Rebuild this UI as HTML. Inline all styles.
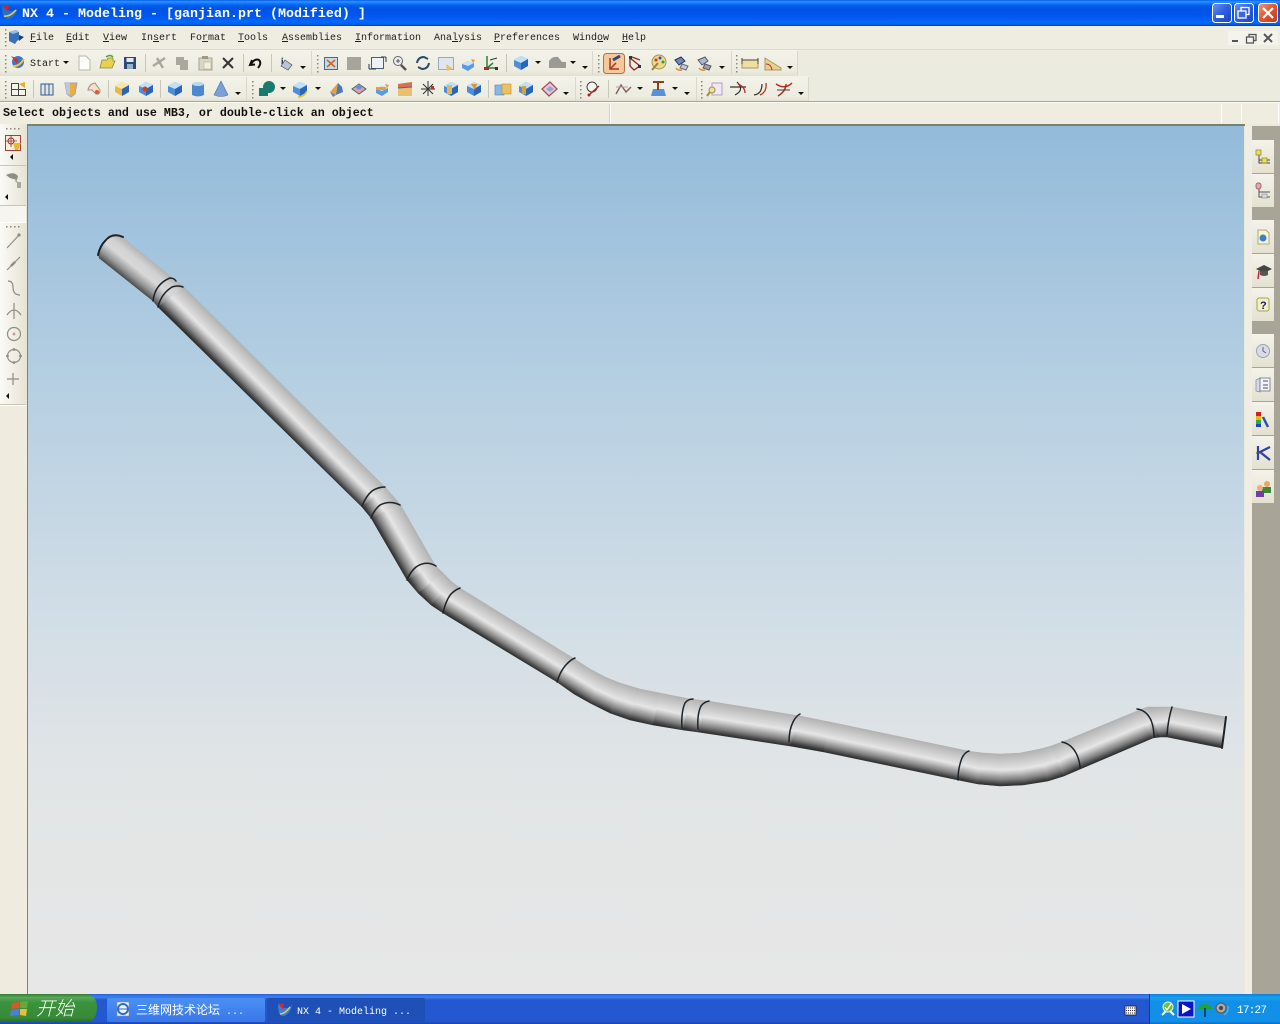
<!DOCTYPE html>
<html><head><meta charset="utf-8"><title>NX 4 - Modeling</title>
<style>
html,body{margin:0;padding:0;width:1280px;height:1024px;overflow:hidden;background:#ece9d8}
svg{display:block;position:absolute;left:0;top:0}
text{white-space:pre}
.m{font:10px "Liberation Mono",monospace;fill:#1c1c1c}
</style></head><body>
<svg width="1280" height="1024" viewBox="0 0 1280 1024" xmlns="http://www.w3.org/2000/svg">
<defs>
<linearGradient id="tb" x1="0" y1="0" x2="0" y2="1">
<stop offset="0" stop-color="#0058ee"/><stop offset=".06" stop-color="#3593ff"/><stop offset=".12" stop-color="#127dff"/><stop offset=".2" stop-color="#0262ee"/><stop offset=".3" stop-color="#0054e3"/><stop offset=".56" stop-color="#0055eb"/><stop offset=".7" stop-color="#005bf5"/><stop offset=".82" stop-color="#026afe"/><stop offset=".92" stop-color="#0062ef"/><stop offset=".97" stop-color="#0052d6"/><stop offset="1" stop-color="#003092"/>
</linearGradient>
<linearGradient id="vp" x1="0" y1="0" x2="0" y2="1">
<stop offset="0" stop-color="#93bbda"/><stop offset=".3" stop-color="#b6cfe2"/><stop offset=".55" stop-color="#d0dde6"/><stop offset=".75" stop-color="#e2e5e6"/><stop offset="1" stop-color="#e7e7e7"/>
</linearGradient>
<linearGradient id="lt" x1="0" y1="0" x2="1" y2="0"><stop offset="0" stop-color="#fbfaf6"/><stop offset="1" stop-color="#e6e3d3"/></linearGradient>
<linearGradient id="rowg" x1="0" y1="0" x2="0" y2="1"><stop offset="0" stop-color="#f4f3ea"/><stop offset=".8" stop-color="#ecebdf"/><stop offset="1" stop-color="#e2e0cf"/></linearGradient>
<linearGradient id="rb" x1="0" y1="0" x2="0" y2="1"><stop offset="0" stop-color="#f4f3ea"/><stop offset="1" stop-color="#e4e1d0"/></linearGradient>
<linearGradient id="btb" x1="0" y1="0" x2="1" y2="1"><stop offset="0" stop-color="#6d93f0"/><stop offset=".5" stop-color="#2e5fdc"/><stop offset="1" stop-color="#1a44c0"/></linearGradient>
<linearGradient id="btr" x1="0" y1="0" x2="1" y2="1"><stop offset="0" stop-color="#ee9a80"/><stop offset=".5" stop-color="#e0542e"/><stop offset="1" stop-color="#c43a18"/></linearGradient>
<linearGradient id="tk" x1="0" y1="0" x2="0" y2="1"><stop offset="0" stop-color="#2a62d8"/><stop offset=".1" stop-color="#3c82ee"/><stop offset=".2" stop-color="#2458d0"/><stop offset=".9" stop-color="#2458d0"/><stop offset="1" stop-color="#1c44a8"/></linearGradient>
<linearGradient id="tr" x1="0" y1="0" x2="0" y2="1"><stop offset="0" stop-color="#0f7ed8"/><stop offset=".12" stop-color="#19a0ee"/><stop offset=".25" stop-color="#1290e8"/><stop offset=".9" stop-color="#1290e8"/><stop offset="1" stop-color="#0c6cc8"/></linearGradient>
<linearGradient id="st" x1="0" y1="0" x2="0" y2="1"><stop offset="0" stop-color="#357a35"/><stop offset=".12" stop-color="#58a858"/><stop offset=".3" stop-color="#3d923d"/><stop offset=".85" stop-color="#378a37"/><stop offset="1" stop-color="#2a6a2a"/></linearGradient>
<linearGradient id="task1" x1="0" y1="0" x2="0" y2="1"><stop offset="0" stop-color="#4a90f4"/><stop offset="1" stop-color="#3a78ea"/></linearGradient>

<linearGradient id="g0" gradientUnits="userSpaceOnUse" x1="0" y1="0" x2="0" y2="1">
<stop offset="0" stop-color="#b4b4b4"/><stop offset=".25" stop-color="#d2d2d2"/><stop offset=".5" stop-color="#d8d8d8"/><stop offset=".78" stop-color="#989898"/><stop offset="1" stop-color="#4a4a4a"/>
</linearGradient>
<linearGradient id="g1" gradientUnits="userSpaceOnUse" x1="0" y1="0" x2="0" y2="1">
<stop offset="0" stop-color="#b2b2b2"/><stop offset=".2" stop-color="#c6c6c6"/><stop offset=".42" stop-color="#dcdcdc"/><stop offset=".5" stop-color="#e6e6e6"/><stop offset=".6" stop-color="#c8c8c8"/><stop offset=".8" stop-color="#828282"/><stop offset=".95" stop-color="#3e3e3e"/><stop offset="1" stop-color="#2e2e2e"/>
</linearGradient>
<linearGradient id="q1" href="#g0" x1="148" y1="258" x2="128.8" y2="281.9"/>
<linearGradient id="q2" href="#g0" x1="179" y1="283" x2="159.6" y2="307.2"/>
<linearGradient id="q3" href="#g1" x1="284.5" y1="387" x2="262.4" y2="409.3"/>
<linearGradient id="q4" href="#g1" x1="392.5" y1="495.5" x2="366.5" y2="512.5"/>
<linearGradient id="q5" href="#g1" x1="417.5" y1="534.5" x2="389.8" y2="550.5"/>
<linearGradient id="q6" href="#g1" x1="439" y1="569" x2="412.5" y2="586.5"/>
<linearGradient id="q7a" href="#g1" x1="447.5" y1="577.5" x2="424.5" y2="599"/>
<linearGradient id="q7b" href="#g1" x1="456" y1="585" x2="437" y2="609"/>
<linearGradient id="q8" href="#g1" x1="516.5" y1="623" x2="501.1" y2="648.2"/>
<linearGradient id="q9" href="#g1" x1="581.5" y1="663.5" x2="566" y2="688.7"/>
<linearGradient id="q10a" href="#g1" x1="597.5" y1="673" x2="582" y2="698.5"/>
<linearGradient id="q10b" href="#g1" x1="612.5" y1="680" x2="600" y2="708"/>
<linearGradient id="q11a" href="#g1" x1="630" y1="686" x2="620" y2="716.5"/>
<linearGradient id="q11b" href="#g1" x1="650" y1="691" x2="641.5" y2="722.5"/>
<linearGradient id="q12" href="#g1" x1="675" y1="696" x2="668" y2="727.5"/>
<linearGradient id="q13" href="#g1" x1="699" y1="700" x2="690.5" y2="731"/>
<linearGradient id="q14" href="#g1" x1="754" y1="708.5" x2="749.1" y2="739.8"/>
<linearGradient id="q15" href="#g1" x1="815" y1="719" x2="809.1" y2="748.4"/>
<linearGradient id="q16" href="#g1" x1="899" y1="736.5" x2="892.7" y2="766.4"/>
<linearGradient id="q17" href="#g1" x1="975.5" y1="752" x2="968" y2="782"/>
<linearGradient id="q18" href="#g1" x1="991.5" y1="753.5" x2="989" y2="785"/>
<linearGradient id="q19" href="#g1" x1="1010" y1="753.5" x2="1011.5" y2="785.5"/>
<linearGradient id="q20" href="#g1" x1="1030" y1="751" x2="1035.5" y2="783"/>
<linearGradient id="q21a" href="#g1" x1="1045.5" y1="747.5" x2="1056" y2="778.5"/>
<linearGradient id="q21b" href="#g1" x1="1056.5" y1="744" x2="1071" y2="773"/>
<linearGradient id="q22" href="#g1" x1="1099.5" y1="726.5" x2="1111.7" y2="755.6"/>
<linearGradient id="q23" href="#g1" x1="1142" y1="709" x2="1156.5" y2="737.5"/>
<linearGradient id="q24" href="#g1" x1="1159.5" y1="707" x2="1163.5" y2="737"/>
<linearGradient id="q25" href="#g1" x1="1199" y1="712" x2="1193.2" y2="742.1"/>

<g id="grip" fill="#8a8878"><rect x="0" y="0" width="1.5" height="1.5"/><rect x="0" y="4" width="1.5" height="1.5"/><rect x="0" y="8" width="1.5" height="1.5"/><rect x="0" y="12" width="1.5" height="1.5"/><rect x="0" y="16" width="1.5" height="1.5"/></g>
<path id="ar" d="M-3 0H3L0 3Z" fill="#111"/>
<g id="cb"><path d="M-7-3L0-7L7-4V3L0 7L-7 3Z" fill="#4a8fd8"/><path d="M-7-3L0-7L7-4L0 0Z" fill="#bfe0f8"/><path d="M0 0L7-4V3L0 7Z" fill="#2a66b8"/></g>
<g id="cy"><path d="M-7-3L0-7L7-4V3L0 7L-7 3Z" fill="#e8b848"/><path d="M-7-3L0-7L7-4L0 0Z" fill="#f6e6a8"/><path d="M0 0L7-4V3L0 7Z" fill="#2a66b8"/></g>
<g id="sb"><path d="M-6-1L0-4L6-2V2L0 6L-6 3Z" fill="#5a9ae0"/><path d="M-6-1L0-4L6-2L0 1Z" fill="#c8e4f8"/><path d="M3-6L7-5L5-2Z" fill="#e89830"/></g>
</defs>

<!-- base chrome -->
<rect width="1280" height="1024" fill="#ece9d8"/>
<!-- viewport -->
<rect x="28" y="126" width="1216" height="868" fill="url(#vp)"/>
<rect x="27" y="124" width="1" height="870" fill="#7d8578"/>
<rect x="27" y="124" width="1218" height="2" fill="#7a8072"/>

<!-- tube -->
<g>
<path d="M122 237Q110 230 103 242L98 254L99 258L122 237Z" fill="url(#q1)"/>
<path d="M122 237L174 279L153 301L99 258Z" fill="url(#q1)" stroke="url(#q1)" stroke-width=".5"/>
<path d="M174 279L184 287L158 307L153 301Z" fill="url(#q2)" stroke="url(#q2)" stroke-width=".5"/>
<path d="M184 287L385 487L362 507L158 307Z" fill="url(#q3)" stroke="url(#q3)" stroke-width=".5"/>
<path d="M385 487L400 504L371 518L362 507Z" fill="url(#q4)" stroke="url(#q4)" stroke-width=".5"/>
<path d="M400 504L435 565L407 580L371 518Z" fill="url(#q5)" stroke="url(#q5)" stroke-width=".5"/>
<path d="M435 565L443 573L418 593L407 580Z" fill="url(#q6)" stroke="url(#q6)" stroke-width=".5"/>
<path d="M443 573L452 582L431 605L418 593Z" fill="url(#q7a)" stroke="url(#q7a)" stroke-width=".5"/>
<path d="M452 582L460 588L443 613L431 605Z" fill="url(#q7b)" stroke="url(#q7b)" stroke-width=".5"/>
<path d="M460 588L573 658L557 682L443 613Z" fill="url(#q8)" stroke="url(#q8)" stroke-width=".5"/>
<path d="M573 658L590 669L574 694L557 682Z" fill="url(#q9)" stroke="url(#q9)" stroke-width=".5"/>
<path d="M590 669L605 677L590 703L574 694Z" fill="url(#q10a)" stroke="url(#q10a)" stroke-width=".5"/>
<path d="M605 677L620 683L610 713L590 703Z" fill="url(#q10b)" stroke="url(#q10b)" stroke-width=".5"/>
<path d="M620 683L640 689L630 720L610 713Z" fill="url(#q11a)" stroke="url(#q11a)" stroke-width=".5"/>
<path d="M640 689L660 693L653 725L630 720Z" fill="url(#q11b)" stroke="url(#q11b)" stroke-width=".5"/>
<path d="M660 693L690 699L683 730L653 725Z" fill="url(#q12)" stroke="url(#q12)" stroke-width=".5"/>
<path d="M690 699L708 701L698 732L683 730Z" fill="url(#q13)" stroke="url(#q13)" stroke-width=".5"/>
<path d="M708 701L800 716L790 746L698 732Z" fill="url(#q14)" stroke="url(#q14)" stroke-width=".5"/>
<path d="M800 716L830 722L824 752L790 746Z" fill="url(#q15)" stroke="url(#q15)" stroke-width=".5"/>
<path d="M830 722L968 751L958 780L824 752Z" fill="url(#q16)" stroke="url(#q16)" stroke-width=".5"/>
<path d="M968 751L983 753L978 784L958 780Z" fill="url(#q17)" stroke="url(#q17)" stroke-width=".5"/>
<path d="M983 753L1000 754L1000 786L978 784Z" fill="url(#q18)" stroke="url(#q18)" stroke-width=".5"/>
<path d="M1000 754L1020 753L1023 785L1000 786Z" fill="url(#q19)" stroke="url(#q19)" stroke-width=".5"/>
<path d="M1020 753L1040 749L1048 781L1023 785Z" fill="url(#q20)" stroke="url(#q20)" stroke-width=".5"/>
<path d="M1040 749L1051 746L1064 776L1048 781Z" fill="url(#q21a)" stroke="url(#q21a)" stroke-width=".5"/>
<path d="M1051 746L1062 742L1078 770L1064 776Z" fill="url(#q21b)" stroke="url(#q21b)" stroke-width=".5"/>
<path d="M1062 742L1137 711L1153 738L1078 770Z" fill="url(#q22)" stroke="url(#q22)" stroke-width=".5"/>
<path d="M1137 711L1147 707L1160 737L1153 738Z" fill="url(#q23)" stroke="url(#q23)" stroke-width=".5"/>
<path d="M1147 707L1172 707L1167 737L1160 737Z" fill="url(#q24)" stroke="url(#q24)" stroke-width=".5"/>
<path d="M1172 707L1226 717L1222 748L1167 737Z" fill="url(#q25)" stroke="url(#q25)" stroke-width=".5"/>
</g>
<!-- rings -->
<g fill="none" stroke="#1c242a" stroke-width="1.5" stroke-linecap="round">
<path d="M98 255Q100 246 105 241Q112 232 123 237" stroke-width="2"/>
<path d="M153 301Q155 284 170 278Q174 278 176 281"/>
<path d="M158 307Q161 294 172 287Q178 285 183 287"/>
<path d="M362 506Q366 496 372 491Q378 487 385 487"/>
<path d="M371 518Q374 510 380 505Q390 500 400 505"/>
<path d="M407 580Q410 572 416 567Q426 560 436 566"/>
<path d="M443 613Q446 600 451 594Q455 590 460 588"/>
<path d="M557 682Q560 672 565 666Q570 660 575 658"/>
<path d="M682 728Q681 712 685 703Q688 699 693 699"/>
<path d="M698 729Q697 714 701 706Q704 702 709 701"/>
<path d="M789 742Q789 730 793 722Q796 716 800 714"/>
<path d="M958 780Q958 768 962 758Q965 752 969 751"/>
<path d="M1062 742Q1072 744 1077 755Q1080 762 1080 768"/>
<path d="M1137 709Q1146 710 1151 720Q1154 728 1154 737"/>
<path d="M1172 707Q1168 720 1167 735"/>
<path d="M1226 717L1222 748" stroke-width="2"/>
</g>

<!-- title bar -->
<rect width="1280" height="26" fill="url(#tb)"/>
<g transform="translate(10,13)"><path d="M-8-7Q-2-1 4-2Q7-3 8-7Q7 3-1 6Q-5 6-7 3Q-8-3-8-7Z" fill="#2a70c8"/><path d="M-8-8L-1-7L-2-1Z" fill="#d02828"/><path d="M-6 3Q0 4 6-3" fill="none" stroke="#e8d050" stroke-width="1.6"/></g>
<text x="22" y="17" style="font:bold 13.33px 'Liberation Mono',monospace" fill="#fff">NX 4 - Modeling - [ganjian.prt (Modified) ]</text>
<g stroke="#fff" stroke-width="1">
<rect x="1212.500" y="3.500" width="19" height="19" rx="3" fill="url(#btb)"/>
<rect x="1234.500" y="3.500" width="19" height="19" rx="3" fill="url(#btb)"/>
<rect x="1258.500" y="3.500" width="19" height="19" rx="3" fill="url(#btr)"/>
</g>
<rect x="1216" y="15" width="8" height="3" fill="#fff"/>
<g fill="none" stroke="#fff" stroke-width="1.3"><rect x="1241" y="7.500" width="8" height="7"/><rect x="1238" y="11" width="8" height="7" fill="#3a68dc"/></g>
<path d="M1263 8L1273 18M1273 8L1263 18" stroke="#fff" stroke-width="2.2"/>

<!-- menu bar -->
<rect y="26" width="1280" height="24" fill="#efede2"/>
<rect y="49" width="1280" height="1" fill="#dcdaca"/>
<use href="#grip" x="5" y="29"/>
<g transform="translate(16,37)"><path d="M-7-5L0-7L3-5V-1L7 0L1 4L-1 7L-7 4Z" fill="#3a70b8"/><path d="M-7-5L0-7L3-5L-3-3Z" fill="#90c0e8"/><path d="M3-2L8 0L3 4Z" fill="#1c3e78"/></g>
<g class="m">
<text class="m" x="30" y="40"><tspan text-decoration="underline">F</tspan>ile</text>
<text class="m" x="66" y="40"><tspan text-decoration="underline">E</tspan>dit</text>
<text class="m" x="103" y="40"><tspan text-decoration="underline">V</tspan>iew</text>
<text class="m" x="141" y="40">In<tspan text-decoration="underline">s</tspan>ert</text>
<text class="m" x="190" y="40">Fo<tspan text-decoration="underline">r</tspan>mat</text>
<text class="m" x="238" y="40"><tspan text-decoration="underline">T</tspan>ools</text>
<text class="m" x="282" y="40"><tspan text-decoration="underline">A</tspan>ssemblies</text>
<text class="m" x="355" y="40"><tspan text-decoration="underline">I</tspan>nformation</text>
<text class="m" x="434" y="40">Ana<tspan text-decoration="underline">l</tspan>ysis</text>
<text class="m" x="494" y="40"><tspan text-decoration="underline">P</tspan>references</text>
<text class="m" x="573" y="40">Wind<tspan text-decoration="underline">o</tspan>w</text>
<text class="m" x="622" y="40"><tspan text-decoration="underline">H</tspan>elp</text>
</g>
<rect x="1228" y="31" width="50" height="14" fill="#f5f4ec"/>
<rect x="1232" y="40" width="6" height="2" fill="#555"/>
<g fill="none" stroke="#555" stroke-width="1.3"><rect x="1249" y="34.500" width="7" height="6"/><rect x="1246.500" y="37" width="7" height="6" fill="#f5f4ec"/></g>
<path d="M1264 34L1272 42M1272 34L1264 42" stroke="#555" stroke-width="2"/>

<!-- toolbars background -->
<rect y="50" width="1280" height="52" fill="#ecebdf"/>
<rect y="50" width="798" height="26" fill="url(#rowg)"/>
<rect y="76" width="809" height="26" fill="url(#rowg)"/>
<g fill="#dad8c8">
<rect x="311" y="51" width="1" height="24"/><rect x="592" y="51" width="1" height="24"/><rect x="731" y="51" width="1" height="24"/><rect x="797" y="51" width="1" height="24"/>
<rect x="246" y="77" width="1" height="24"/><rect x="575" y="77" width="1" height="24"/><rect x="696" y="77" width="1" height="24"/><rect x="808" y="77" width="1" height="24"/>
</g>
<!-- seps -->
<g fill="#c8c6b6">
<rect x="145" y="54" width="1" height="18"/><rect x="243" y="54" width="1" height="18"/><rect x="271" y="54" width="1" height="18"/><rect x="506" y="54" width="1" height="18"/>
<rect x="33" y="80" width="1" height="18"/><rect x="108" y="80" width="1" height="18"/><rect x="160" y="80" width="1" height="18"/><rect x="488" y="80" width="1" height="18"/><rect x="608" y="80" width="1" height="18"/>
</g>
<use href="#grip" x="5" y="55"/><use href="#grip" x="317" y="55"/><use href="#grip" x="598" y="55"/><use href="#grip" x="736" y="55"/>
<use href="#grip" x="5" y="81"/><use href="#grip" x="252" y="81"/><use href="#grip" x="580" y="81"/><use href="#grip" x="701" y="81"/>

<!-- row 1 icons -->
<g transform="translate(18,62)"><circle cx="0" cy="0" r="6" fill="#3a78c8"/><path d="M-7-6L0-3L-1 2Z" fill="#d03030"/><path d="M-5 4Q1 5 6-3" fill="none" stroke="#e8c840" stroke-width="2"/></g>
<text class="m" x="30" y="66">Start</text><use href="#ar" x="66" y="61"/>
<path d="M79 56H86L90 60V70H79Z" fill="#fcfcf8" stroke="#b8b8b0"/>
<path d="M100 68L102 60H107L108 58H113V61L115 61L112 68Z" fill="#e8d050" stroke="#8a8a3a" stroke-width=".8"/><path d="M106 57Q110 54 113 57" fill="none" stroke="#50a050" stroke-width="1.5"/>
<rect x="124" y="57" width="12" height="12" fill="#2a4a7c"/><rect x="126.500" y="58" width="7" height="4" fill="#e8e8f0"/><rect x="127" y="64" width="6" height="5" fill="#9ab0c8"/>
<path d="M153 66L165 58M157 58L163 68" stroke="#a8a89c" stroke-width="2.5"/>
<path d="M176 57H184V60H188V70H180V65H176Z" fill="#a8a89c"/>
<rect x="199" y="58" width="13" height="12" fill="#d8d6c8" stroke="#a8a69a"/><rect x="202" y="56" width="6" height="3" fill="#a09a80"/><rect x="204" y="62" width="7" height="7" fill="#f4f0d8" stroke="#b0ae9e" stroke-width=".6"/>
<path d="M223 58L233 68M233 58L223 68" stroke="#333" stroke-width="2"/>
<path d="M252 60L250 65L255 64.500M251 64Q255 58 259 60Q262 63 258 68" fill="none" stroke="#111" stroke-width="2"/>
<text x="281" y="64" style="font:bold 9px 'Liberation Serif',serif" fill="#223">i</text><path d="M285 60L292 65L288 70L281 66Z" fill="#b8c4d8" stroke="#555" stroke-width=".7"/><use href="#ar" x="303" y="66"/>
<rect x="324.500" y="57.500" width="13" height="12" fill="#c8d8e8" stroke="#4a6a8a"/><path d="M327 60L335 67M335 60L327 67" stroke="#d06020" stroke-width="1.5"/>
<rect x="347" y="57" width="14" height="13" fill="#a5a59b"/>
<rect x="371.500" y="57.500" width="12" height="11" fill="#eef2f6" stroke="#4a6078"/><path d="M369 69H376M369 69V64M386 57H381M386 57V62" stroke="#2a3a50" fill="none"/>
<circle cx="398" cy="61" r="4.500" fill="#e8eef4" stroke="#666"/><path d="M401 65L406 70" stroke="#555" stroke-width="2.5"/><path d="M396 61H400M398 59V63" stroke="#555"/>
<path d="M417 63Q418 57 424 57L428 59M429 63Q428 69 422 69L418 67" fill="none" stroke="#2a4a6a" stroke-width="2"/>
<rect x="438.500" y="57.500" width="15" height="12" fill="#dfe6ee" stroke="#9aa8b8"/><path d="M446 64L453 69L447 71Z" fill="#e8c060"/>
<use href="#sb" x="468" y="65"/>
<path d="M487 56V68H497M487 68L493 63" fill="none" stroke="#2a8040" stroke-width="1.5"/><path d="M490 60L497 58" stroke="#333"/><rect x="484" y="67" width="5" height="3" fill="#c02020"/><rect x="495" y="67" width="3" height="3" fill="#333"/>
<use href="#cb" x="521" y="63"/><use href="#ar" x="538" y="61"/>
<path d="M549 68V61Q552 56 558 57L562 62H566V68Z" fill="#9a9a94"/><use href="#ar" x="573" y="61"/><use href="#ar" x="585" y="66"/>
<rect x="603.500" y="53.500" width="21" height="20" rx="3" fill="#f7c89a" stroke="#a87848"/>
<path d="M610 58V69H619M610 69L616 63" fill="none" stroke="#b03020" stroke-width="1.5"/><path d="M613 60L620 56" stroke="#304880" stroke-width="3"/>
<path d="M630 58L640 66L634 70L630 66ZM632 57L640 60" fill="none" stroke="#903030" stroke-width="1.4"/><rect x="629" y="56" width="3" height="3" fill="#333"/><rect x="638" y="65" width="3" height="3" fill="#333"/>
<circle cx="659" cy="62" r="7" fill="#e8d890" stroke="#a89848"/><circle cx="656" cy="60" r="1.500" fill="#d03030"/><circle cx="660" cy="58" r="1.500" fill="#3050c0"/><circle cx="663" cy="62" r="1.500" fill="#30a040"/><path d="M652 70L658 63" stroke="#a08040" stroke-width="2"/>
<path d="M675 60L681 57L685 61L679 65Z" fill="#6a8ac0" stroke="#334"/><path d="M682 64L688 66L686 70L680 68Z" fill="#c8c8d0" stroke="#667"/><path d="M676 68Q678 71 682 70" stroke="#d89030" fill="none" stroke-width="1.500"/>
<path d="M698 60L705 57L708 61L702 65Z" fill="#a8b8d0" stroke="#556"/><path d="M705 64L711 66L709 70L703 68Z" fill="#a0a0a8" stroke="#556"/><path d="M699 68Q701 71 705 70" stroke="#d89030" fill="none" stroke-width="1.500"/><use href="#ar" x="722" y="66"/>
<rect x="742" y="60" width="16" height="8" fill="#efe0a0" stroke="#a89860"/><path d="M742 58V64M758 58V64M742 60H758" stroke="#444" fill="none"/>
<path d="M765 58L781 68V70H765Z" fill="#e8d090" stroke="#a89860"/><path d="M766 64Q771 64 772 70" fill="none" stroke="#b04030"/><use href="#ar" x="790" y="66"/>

<!-- row 2 icons -->
<rect x="11.500" y="83.500" width="7" height="6" fill="#f4f4ec" stroke="#444"/><rect x="11.500" y="89.500" width="7" height="6" fill="#f4f4ec" stroke="#444"/><rect x="18.500" y="89.500" width="7" height="6" fill="#f4f4ec" stroke="#444"/><path d="M19 84L25 82V88Z" fill="#e0b030"/>
<path d="M41 84H53V95H41Z" fill="#dfe6f0" stroke="#3a5a80"/><path d="M45 84V95M49 84V95" stroke="#3a5a80"/>
<path d="M65 83H77L75 94L71 97L67 94Z" fill="#e8b040" stroke="#a0a0c0"/><path d="M65 83H70V95L67 94Z" fill="#b8c8e0"/>
<path d="M88 90Q89 84 95 83L100 90Q100 95 96 94L92 90Z" fill="#f0e0c8" stroke="#b08888"/><circle cx="97" cy="92" r="2" fill="#d06030"/>
<use href="#cy" x="122" y="89"/><use href="#cb" x="146" y="89"/><circle cx="145" cy="89" r="2.500" fill="#d04020"/>
<use href="#cb" x="175" y="89"/>
<path d="M192 84Q198 81 204 84V95Q198 98 192 95Z" fill="#4a88d0"/><ellipse cx="198" cy="84" rx="6" ry="2" fill="#b8d8f0"/>
<path d="M221 81L228 95Q221 98 214 95Z" fill="#7aa0d8" stroke="#5070a8" stroke-width=".6"/><use href="#ar" x="238" y="92"/>
<circle cx="269" cy="87" r="6" fill="#1a7a70"/><rect x="259" y="88" width="9" height="8" fill="#1a7a70"/><use href="#ar" x="283" y="87"/>
<use href="#cb" x="300" y="89"/><path d="M298 97Q304 97 307 91" stroke="#e0c030" stroke-width="1.500" fill="none"/><use href="#ar" x="318" y="87"/>
<path d="M330 92L338 83L342 87L336 95Z" fill="#e8a040"/><path d="M330 92L336 95L333 97Z" fill="#5a80c8"/><path d="M338 83L342 87L343 92L336 95Z" fill="#4a78c0"/>
<path d="M352 89L359 84L366 89L359 94Z" fill="#e0a0a0" stroke="#506080"/><ellipse cx="359" cy="87" rx="3" ry="2.500" fill="#6a90d0"/>
<use href="#sb" x="382" y="90"/><rect x="376" y="87" width="10" height="3" fill="#e8a030"/>
<path d="M398 84L412 82V96H398Z" fill="#e8c070"/><path d="M398 84L412 82L412 87L398 88Z" fill="#d87050"/><path d="M398 88L412 87" stroke="#3070c0"/>
<path d="M428 81V96M421 89H435" stroke="#555" stroke-width="1.2"/><path d="M423 84L433 94M433 84L423 94" stroke="#333"/><rect x="431" y="86" width="3" height="3" fill="#c03020"/>
<use href="#cb" x="451" y="89"/><rect x="447" y="85" width="5" height="9" fill="#e8b850"/>
<use href="#cb" x="474" y="89"/><path d="M471 84L477 84L475 90Z" fill="#e09030"/>
<rect x="495" y="85" width="9" height="10" fill="#88b8e0" stroke="#5080b0" stroke-width=".6"/><rect x="502" y="84" width="9" height="10" fill="#eec060" stroke="#b09040" stroke-width=".6"/>
<use href="#cb" x="526" y="89"/><rect x="522" y="86" width="4" height="8" fill="#d8a040"/>
<path d="M542 89L550 82L557 89L549 96Z" fill="#e8c8d8" stroke="#a05060" stroke-width="1.300"/><path d="M546 89L550 86L554 89L550 92Z" fill="#90a8d8"/><use href="#ar" x="566" y="92"/>
<circle cx="592" cy="87" r="5" fill="#f4f4ec" stroke="#444"/><path d="M589 95L599 86" stroke="#903030" stroke-width="1.500"/><circle cx="589" cy="95" r="1.500" fill="#c02020"/>
<path d="M616 94L621 85L626 92L631 87" fill="none" stroke="#8a6060" stroke-width="1.500"/><path d="M616 87L628 87" stroke="#a0a8b0"/><use href="#ar" x="640" y="87"/>
<path d="M651 96L653 89H664L666 96Z" fill="#5a90d8"/><path d="M653 82H664M658 82V90" stroke="#884020" stroke-width="2"/><use href="#ar" x="675" y="87"/><use href="#ar" x="687" y="92"/>
<path d="M712 83H722V95H712Z" fill="#f0e8f4" stroke="#b0a0c0"/><circle cx="712" cy="90" r="3" fill="#f0e0a0" stroke="#a09040"/><path d="M710 92L707 96" stroke="#a09040" stroke-width="2"/>
<path d="M730 87H746M735 95Q745 90 737 82" fill="none" stroke="#333" stroke-width="1.200"/><path d="M738 84Q745 87 745 93" fill="none" stroke="#b03020" stroke-width="1.300"/>
<path d="M754 95Q762 94 762 84" fill="none" stroke="#333" stroke-width="1.200"/><path d="M760 95Q767 92 766 83" fill="none" stroke="#c03020" stroke-width="1.300"/>
<path d="M776 84Q785 90 792 83M778 96Q786 91 786 84" fill="none" stroke="#b03020" stroke-width="1.500"/><path d="M777 90H790" stroke="#404040"/><use href="#ar" x="801" y="92"/>

<!-- prompt bar -->
<rect y="101" width="1280" height="1" fill="#a8a694"/>
<rect y="102" width="1280" height="22" fill="#efede0"/>
<rect y="102" width="1280" height="1" fill="#fafaf4"/>
<rect x="610" y="104" width="1" height="19" fill="#fff"/><rect x="609" y="104" width="1" height="19" fill="#d5d3c2"/>
<rect x="1221" y="104" width="1" height="19" fill="#fff"/><rect x="1241" y="104" width="1" height="19" fill="#fff"/><rect x="1278" y="104" width="1" height="19" fill="#fff"/>
<text x="3" y="116" style="font:bold 11.67px 'Liberation Mono',monospace" fill="#111">Select objects and use MB3, or double-click an object</text>

<!-- left toolbar -->
<rect x="0" y="124" width="27" height="870" fill="#efecdf"/>
<rect x="0" y="124" width="27" height="280" fill="url(#lt)"/>
<g fill="#8a8878"><rect x="6" y="128" width="1.500" height="1.500"/><rect x="10" y="128" width="1.500" height="1.500"/><rect x="14" y="128" width="1.500" height="1.500"/><rect x="18" y="128" width="1.500" height="1.500"/>
<rect x="6" y="226" width="1.500" height="1.500"/><rect x="10" y="226" width="1.500" height="1.500"/><rect x="14" y="226" width="1.500" height="1.500"/><rect x="18" y="226" width="1.500" height="1.500"/></g>
<rect x="5.500" y="135.500" width="15" height="15" fill="#f6ecd8" stroke="#a04040"/>
<circle cx="11" cy="141" r="3" fill="none" stroke="#903030"/><path d="M5 141H17M11 135V147" stroke="#903030" stroke-width=".8"/><path d="M13 143H21L18 150H15Z" fill="#e8b830"/>
<path d="M13 154V160L10 157Z" fill="#111"/>
<rect x="0" y="165" width="26" height="1" fill="#c8c6b6"/>
<path d="M6 175Q14 171 18 176L17 180L10 178Z" fill="#8e8e88"/><path d="M15 181Q16 176 18 184M17 182H21V188H17Z" fill="#a8a8a0"/>
<path d="M8 194V200L5 197Z" fill="#111"/>
<rect x="0" y="205" width="26" height="1" fill="#c8c6b6"/>
<rect x="0" y="206" width="26" height="16" fill="#f6f5ef"/>
<rect x="0" y="222" width="26" height="1" fill="#fff"/>
<g fill="none" stroke="#8e8e86" stroke-width="1.200">
<path d="M7 248L20 234"/><circle cx="19" cy="235" r="1" fill="#777"/>
<path d="M7 270L20 257"/><path d="M11 266L15 262" stroke-width="2.500"/>
<path d="M8 281Q13 281 13 287Q13 295 20 295"/>
<path d="M14 303V319M7 315Q14 305 21 315"/>
<circle cx="14" cy="334" r="6.500"/><path d="M12.500 334H15.500M14 332.500V335.500" stroke="#c09090"/>
<circle cx="14" cy="356" r="6.500"/><circle cx="14" cy="349.500" r=".8" fill="#777"/><circle cx="7.500" cy="356" r=".8" fill="#777"/><circle cx="20.500" cy="356" r=".8" fill="#777"/><circle cx="14" cy="362.500" r=".8" fill="#777"/>
<path d="M13 373V385M7 379H19"/>
</g>
<path d="M9 393V399L6 396Z" fill="#111"/>
<rect x="0" y="404" width="26" height="1" fill="#c8c6b6"/>
<rect x="0" y="405" width="26" height="1" fill="#fff"/>

<!-- right side -->
<rect x="1245" y="126" width="7" height="868" fill="#f0eee4"/>
<rect x="1252" y="126" width="28" height="868" fill="#a8a598"/>
<g fill="url(#rb)">
<rect x="1252" y="140" width="22" height="33"/><rect x="1252" y="174" width="22" height="33"/>
<rect x="1252" y="220" width="22" height="33"/><rect x="1252" y="254" width="22" height="33"/><rect x="1252" y="288" width="22" height="33"/>
<rect x="1252" y="334" width="22" height="33"/><rect x="1252" y="368" width="22" height="33"/><rect x="1252" y="402" width="22" height="33"/><rect x="1252" y="436" width="22" height="33"/><rect x="1252" y="470" width="22" height="33"/>
</g>
<path d="M1259 153V160H1270M1259 160V163H1270" fill="none" stroke="#444"/><rect x="1256" y="150" width="5" height="5" fill="#e8e060" stroke="#8a8030" stroke-width=".7"/><rect x="1262" y="158" width="5" height="5" fill="#e8e060" stroke="#8a8030" stroke-width=".7"/>
<path d="M1259 186V197H1270M1259 192H1270" fill="none" stroke="#555"/><rect x="1256" y="183" width="5" height="6" rx="2" fill="#e0a8b0" stroke="#904050" stroke-width=".7"/><rect x="1262" y="194" width="5" height="4" fill="#d8d8e0" stroke="#888" stroke-width=".6"/>
<path d="M1258 230H1266L1269 233V244H1258Z" fill="#f8f4d8" stroke="#b0a878"/><circle cx="1263" cy="238" r="3.500" fill="#3a80c8"/>
<path d="M1256 269L1264 265L1272 269L1264 273Z" fill="#444"/><path d="M1260 271V275Q1264 277 1268 275V271" fill="#555"/><path d="M1259 271L1258 279" stroke="#d02030" stroke-width="1.500"/>
<rect x="1257" y="298" width="12" height="13" rx="2" fill="#f4f0c0" stroke="#a0a070"/><text x="1260" y="309" style="font:bold 11px 'Liberation Sans',sans-serif" fill="#181880">?</text>
<circle cx="1263" cy="351" r="6.500" fill="#d8dce8" stroke="#a0a4b0"/><path d="M1263 347V351L1266 353" stroke="#666" fill="none"/>
<path d="M1256 380L1260 378V392L1256 391Z" fill="#d8d8e8" stroke="#8a8aa0" stroke-width=".7"/><rect x="1260" y="378" width="10" height="13" fill="#f4f4f8" stroke="#6a7090" stroke-width=".8"/><path d="M1263 381H1268M1263 385H1268M1263 388H1268" stroke="#555"/>
<rect x="1256" y="412" width="5" height="4" fill="#d02020"/><rect x="1256" y="416" width="5" height="4" fill="#f0b020"/><rect x="1256" y="420" width="5" height="4" fill="#30b030"/><rect x="1256" y="424" width="5" height="3" fill="#2040d0"/><path d="M1263 417L1268 427" stroke="#3050b0" stroke-width="2.500"/>
<path d="M1258 446V460M1258 453L1270 447M1260 452L1270 460" stroke="#3040a8" stroke-width="2.200" fill="none"/><path d="M1256 453H1262" stroke="#555"/>
<circle cx="1267" cy="484" r="3" fill="#e8a860"/><rect x="1262" y="487" width="9" height="6" fill="#3a8a3a"/><circle cx="1260" cy="488" r="3" fill="#e8b080"/><rect x="1256" y="491" width="8" height="6" fill="#7040a0"/>

<!-- taskbar -->
<rect y="994" width="1280" height="30" fill="url(#tk)"/>
<path d="M0 994H88Q96 996 97 1006Q97 1018 90 1022H0Z" fill="url(#st)"/>
<g transform="translate(20,1009)"><path d="M-8-6L-1-7V-1L-9 0Z" fill="#d8582c"/><path d="M0-7L8-8L7-1L0-1Z" fill="#68a838"/><path d="M-9 1L-1 0V6L-10 7Z" fill="#4a80d8"/><path d="M0 0L7 0L6 7L0 6Z" fill="#e8c030"/></g>
<text x="36" y="1015" style="font:italic 300 19px 'Noto Sans CJK SC','WenQuanYi Zen Hei',sans-serif" fill="#fff">开始</text>
<rect x="107" y="998" width="158" height="24" rx="2" fill="url(#task1)"/>
<rect x="267" y="998" width="158" height="24" rx="2" fill="#1e50b8"/>
<rect x="117" y="1002" width="12" height="14" fill="#f0f0f0" stroke="#8a8aa0" stroke-width=".6"/><circle cx="123" cy="1009" r="5" fill="none" stroke="#2a70c8" stroke-width="2"/><path d="M119 1009H127" stroke="#2a70c8"/>
<text x="136" y="1014" style="font:12px 'Noto Sans CJK SC','WenQuanYi Zen Hei','Liberation Sans',sans-serif" fill="#fff">三维网技术论坛</text>
<text x="226" y="1014" class="m" style="fill:#fff">...</text>
<g transform="translate(285,1010)"><path d="M-7-6Q-2-1 3-2Q6-3 7-6Q6 3-1 6Q-5 6-6 3Q-7-3-7-6Z" fill="#3a80d8"/><path d="M-7-7L-1-6L-2 0Z" fill="#d82828"/><path d="M-5 4Q0 4 5-3" fill="none" stroke="#e8d050" stroke-width="1.400"/></g>
<text x="297" y="1014" class="m" style="fill:#fff">NX 4 - Modeling ...</text>
<rect x="1125" y="1006" width="11" height="9" fill="#f4f4f4" stroke="#222" stroke-width=".8"/><path d="M1126 1008H1135M1126 1010.500H1135M1126 1013H1135" stroke="#333" stroke-dasharray="1 1"/>
<rect x="1150" y="994" width="130" height="30" fill="url(#tr)"/>
<rect x="1149" y="994" width="1" height="30" fill="#0a3f98"/>
<circle cx="1168" cy="1007" r="5" fill="#70c040" stroke="#e8f0d0"/><path d="M1165 1007L1167 1010L1171 1004" stroke="#fff" fill="none" stroke-width="1.300"/><path d="M1162 1015L1166 1011M1174 1015L1170 1011" stroke="#fff" stroke-width="2"/>
<rect x="1178" y="1001" width="16" height="16" fill="#0a14c8" stroke="#fff"/><path d="M1182 1004L1191 1009L1182 1014Z" fill="#fff"/>
<path d="M1197 1009Q1205 998 1213 1009Z" fill="#20a040"/><path d="M1205 1008V1017" stroke="#083050" stroke-width="1.500"/>
<circle cx="1221" cy="1008" r="5" fill="#b0a8a0" stroke="#555"/><circle cx="1221" cy="1008" r="2" fill="#444"/><path d="M1224 1015Q1229 1012 1228 1006" stroke="#7ab0f0" fill="none"/>
<text x="1237" y="1013" style="font:11px 'Liberation Mono',monospace" fill="#fff" textLength="30">17:27</text>
</svg>
</body></html>
